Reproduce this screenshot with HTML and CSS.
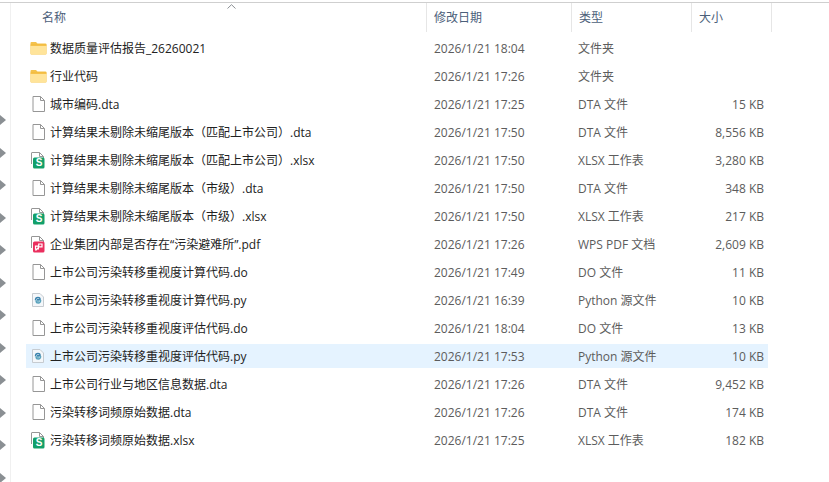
FILE: index.html
```html
<!DOCTYPE html>
<html lang="zh-CN">
<head>
<meta charset="utf-8">
<title>文件列表</title>
<link rel="stylesheet" href="styles.css">
</head>
<body>
<svg class="defs" width="0" height="0" aria-hidden="true">
  <defs>
    <symbol id="folder" viewBox="0 0 17 14">
      <path d="M0.5 2 Q0.5 1 1.5 1 H6 L7.5 2.6 H15.5 Q16.5 2.6 16.5 3.6 V12.5 Q16.5 13.5 15.5 13.5 H1.5 Q0.5 13.5 0.5 12.5Z" fill="#f4c24c"/>
      <path d="M0.5 4.4 H16.5 V12.5 Q16.5 13.5 15.5 13.5 H1.5 Q0.5 13.5 0.5 12.5Z" fill="#ffe49a"/>
      <path d="M0.5 3.6 H16.5 V4.6 H0.5Z" fill="#f2b632"/>
    </symbol>
    <symbol id="doc" viewBox="0 0 13 16">
      <path d="M1 .5 H8.5 L12.5 4.5 V15.5 H1Z" fill="#fff" stroke="#969696"/>
      <path d="M8.5 .5 V4.5 H12.5" fill="none" stroke="#969696"/>
    </symbol>
    <symbol id="xlsx" viewBox="0 0 15 17">
      <path d="M1.5 12 V1 Q1.5 .5 2 .5 H9.5 L13.5 4.5 V8" fill="#fff" stroke="#969696"/>
      <path d="M9.5 .5 V4.5 H13.5" fill="none" stroke="#969696"/>
      <rect x="3" y="5.5" width="11.5" height="11" rx="1.5" fill="#12a06a"/>
    </symbol>
    <symbol id="pdf" viewBox="0 0 15 17">
      <path d="M1.5 12 V1 Q1.5 .5 2 .5 H9.5 L13.5 4.5 V8" fill="#fff" stroke="#969696"/>
      <path d="M9.5 .5 V4.5 H13.5" fill="none" stroke="#969696"/>
      <rect x="3" y="5.5" width="11.5" height="11" rx="1.5" fill="#ea2f5e"/>
      <path d="M5.5 14.5 L8 12 M8.7 8 H12 V10.8 H8.7Z M5.5 10.2 H8.4 V13 H5.5Z" fill="none" stroke="#fff" stroke-width="1.2"/>
    </symbol>
    <symbol id="py" viewBox="0 0 12 14">
      <path d="M.5 .5 H8 L11.5 4 V13.5 H.5Z" fill="#f4f7fa" stroke="#c6cbd0"/>
      <path d="M3.5 7.2 Q3.5 4.6 6 4.6 Q8 4.6 8 5.8 V6.8 H5" fill="none" stroke="#3b83ad" stroke-width="1.5"/>
      <path d="M8.6 7 Q8.6 10 6.2 10 Q4.2 10 4.2 8.8 V8.1 H7" fill="none" stroke="#5aa3bd" stroke-width="1.5"/>
    </symbol>
  </defs>
</svg>
<div class="window">
  <aside class="nav">
    <svg class="nav-arrow" viewBox="0 0 6 10"><path d="M0 0 L6 5 L0 10Z"/></svg>
    <svg class="nav-arrow" viewBox="0 0 6 10"><path d="M0 0 L6 5 L0 10Z"/></svg>
    <svg class="nav-arrow" viewBox="0 0 6 10"><path d="M0 0 L6 5 L0 10Z"/></svg>
    <svg class="nav-arrow" viewBox="0 0 6 10"><path d="M0 0 L6 5 L0 10Z"/></svg>
    <svg class="nav-arrow" viewBox="0 0 6 10"><path d="M0 0 L6 5 L0 10Z"/></svg>
    <svg class="nav-arrow" viewBox="0 0 6 10"><path d="M0 0 L6 5 L0 10Z"/></svg>
    <svg class="nav-arrow" viewBox="0 0 6 10"><path d="M0 0 L6 5 L0 10Z"/></svg>
    <svg class="nav-arrow" viewBox="0 0 6 10"><path d="M0 0 L6 5 L0 10Z"/></svg>
    <svg class="nav-arrow" viewBox="0 0 6 10"><path d="M0 0 L6 5 L0 10Z"/></svg>
    <svg class="nav-arrow" viewBox="0 0 6 10"><path d="M0 0 L6 5 L0 10Z"/></svg>
    <svg class="nav-arrow" viewBox="0 0 6 10"><path d="M0 0 L6 5 L0 10Z"/></svg>
    <svg class="nav-arrow" viewBox="0 0 6 10"><path d="M0 0 L6 5 L0 10Z"/></svg>
  </aside>
  <main class="pane">
    <header class="head">
      <div class="col col-name">名称<svg class="sort" viewBox="0 0 9 5"><path d="M.5 4.5 L4.5 .7 L8.5 4.5"/></svg></div>
      <div class="col col-date">修改日期</div>
      <div class="col col-type">类型</div>
      <div class="col col-size">大小</div>
      <div class="col col-rest"></div>
    </header>
    <div class="list">
      <div class="row"><span class="name"><svg class="ic ic-folder"><use href="#folder"/></svg>数据质量评估报告_26260021</span><span class="date">2026/1/21 18:04</span><span class="type">文件夹</span><span class="size"></span></div>
      <div class="row"><span class="name"><svg class="ic ic-folder"><use href="#folder"/></svg>行业代码</span><span class="date">2026/1/21 17:26</span><span class="type">文件夹</span><span class="size"></span></div>
      <div class="row"><span class="name"><svg class="ic ic-doc"><use href="#doc"/></svg>城市编码.dta</span><span class="date">2026/1/21 17:25</span><span class="type">DTA 文件</span><span class="size">15 KB</span></div>
      <div class="row"><span class="name"><svg class="ic ic-doc"><use href="#doc"/></svg>计算结果未剔除未缩尾版本（匹配上市公司）.dta</span><span class="date">2026/1/21 17:50</span><span class="type">DTA 文件</span><span class="size">8,556 KB</span></div>
      <div class="row"><span class="name"><span class="badged"><svg class="ic ic-badge"><use href="#xlsx"/></svg><b class="badge">S</b></span>计算结果未剔除未缩尾版本（匹配上市公司）.xlsx</span><span class="date">2026/1/21 17:50</span><span class="type">XLSX 工作表</span><span class="size">3,280 KB</span></div>
      <div class="row"><span class="name"><svg class="ic ic-doc"><use href="#doc"/></svg>计算结果未剔除未缩尾版本（市级）.dta</span><span class="date">2026/1/21 17:50</span><span class="type">DTA 文件</span><span class="size">348 KB</span></div>
      <div class="row"><span class="name"><span class="badged"><svg class="ic ic-badge"><use href="#xlsx"/></svg><b class="badge">S</b></span>计算结果未剔除未缩尾版本（市级）.xlsx</span><span class="date">2026/1/21 17:50</span><span class="type">XLSX 工作表</span><span class="size">217 KB</span></div>
      <div class="row"><span class="name"><svg class="ic ic-badge"><use href="#pdf"/></svg>企业集团内部是否存在“污染避难所”.pdf</span><span class="date">2026/1/21 17:26</span><span class="type">WPS PDF 文档</span><span class="size">2,609 KB</span></div>
      <div class="row"><span class="name"><svg class="ic ic-doc"><use href="#doc"/></svg>上市公司污染转移重视度计算代码.do</span><span class="date">2026/1/21 17:49</span><span class="type">DO 文件</span><span class="size">11 KB</span></div>
      <div class="row"><span class="name"><svg class="ic ic-py"><use href="#py"/></svg>上市公司污染转移重视度计算代码.py</span><span class="date">2026/1/21 16:39</span><span class="type">Python 源文件</span><span class="size">10 KB</span></div>
      <div class="row"><span class="name"><svg class="ic ic-doc"><use href="#doc"/></svg>上市公司污染转移重视度评估代码.do</span><span class="date">2026/1/21 18:04</span><span class="type">DO 文件</span><span class="size">13 KB</span></div>
      <div class="row selected"><span class="name"><svg class="ic ic-py"><use href="#py"/></svg>上市公司污染转移重视度评估代码.py</span><span class="date">2026/1/21 17:53</span><span class="type">Python 源文件</span><span class="size">10 KB</span></div>
      <div class="row"><span class="name"><svg class="ic ic-doc"><use href="#doc"/></svg>上市公司行业与地区信息数据.dta</span><span class="date">2026/1/21 17:26</span><span class="type">DTA 文件</span><span class="size">9,452 KB</span></div>
      <div class="row"><span class="name"><svg class="ic ic-doc"><use href="#doc"/></svg>污染转移词频原始数据.dta</span><span class="date">2026/1/21 17:26</span><span class="type">DTA 文件</span><span class="size">174 KB</span></div>
      <div class="row"><span class="name"><span class="badged"><svg class="ic ic-badge"><use href="#xlsx"/></svg><b class="badge">S</b></span>污染转移词频原始数据.xlsx</span><span class="date">2026/1/21 17:25</span><span class="type">XLSX 工作表</span><span class="size">182 KB</span></div>
    </div>
  </main>
</div>
</body>
</html>
```

FILE: styles.css
```css
* { box-sizing: border-box; }
html, body { margin: 0; height: 100%; background: #fff; overflow: hidden; }
body {
  font-family: "Open Sans", "Noto Sans CJK SC", sans-serif;
  font-size: 12px;
  color: #1f1f1f;
}
.defs { display: block; height: 0; }
.window {
  display: flex;
  height: 482px;
  margin-top: 2px;
  border-top: 1px solid #cfcfcf;
}
.nav {
  width: 11px;
  flex: none;
  border-right: 1px solid #f0f0f0;
  display: flex;
  flex-direction: column;
  gap: 22.5px;
  padding-top: 112px;
}
.nav-arrow { width: 6px; height: 10px; flex: none; fill: #8a8f93; }
.pane { flex: 1; min-width: 0; }
.head {
  display: grid;
  grid-template-columns: 416px 145px 120px 80px 1fr;
  height: 29px;
  color: #4c607a;
}
.col {
  position: relative;
  display: flex;
  align-items: center;
  padding-left: 7px;
  padding-bottom: 2px;
  border-right: 1px solid #e6e6e6;
}
.col-name { padding-left: 31px; }
.col-date { padding-left: 7px; }
.col-rest { border-right: 0; }
.sort {
  position: absolute;
  left: 216px;
  top: 1px;
  width: 9px;
  height: 5px;
  fill: none;
  stroke: #8a8f93;
}
.list {
  display: flex;
  flex-direction: column;
  gap: 4px;
  padding-top: 4px;
  margin-left: 15px;
  width: 742px;
}
.row {
  display: grid;
  grid-template-columns: 401px 144px 120px 73px;
  height: 24px;
  padding-top: 1px;
  align-items: center;
  line-height: 24px;
  white-space: nowrap;
}
.selected { background: #e5f3ff; }
.name { display: flex; align-items: center; padding-left: 4px; color: #222; }
.date { padding-left: 7px; color: #5c5c5c; }
.type { padding-left: 7px; color: #5c5c5c; }
.size { text-align: right; color: #5c5c5c; }
.ic { flex: none; display: block; }
.ic-folder { width: 17px; height: 14px; margin-right: 3px; margin-bottom: 2px; }
.ic-doc { width: 13px; height: 16px; margin: 0 5px 2px 2px; }
.ic-py { width: 12px; height: 14px; margin: 0 6px 2px 2px; }
.ic-badge { width: 15px; height: 17px; margin: 0 5px 2px 0; }
.badged { position: relative; display: flex; }
.badge {
  position: absolute;
  left: 3px;
  top: 5px;
  width: 12px;
  height: 12px;
  font: bold 10px/12px "Liberation Sans", sans-serif;
  text-align: center;
  color: #fff;
}
```
